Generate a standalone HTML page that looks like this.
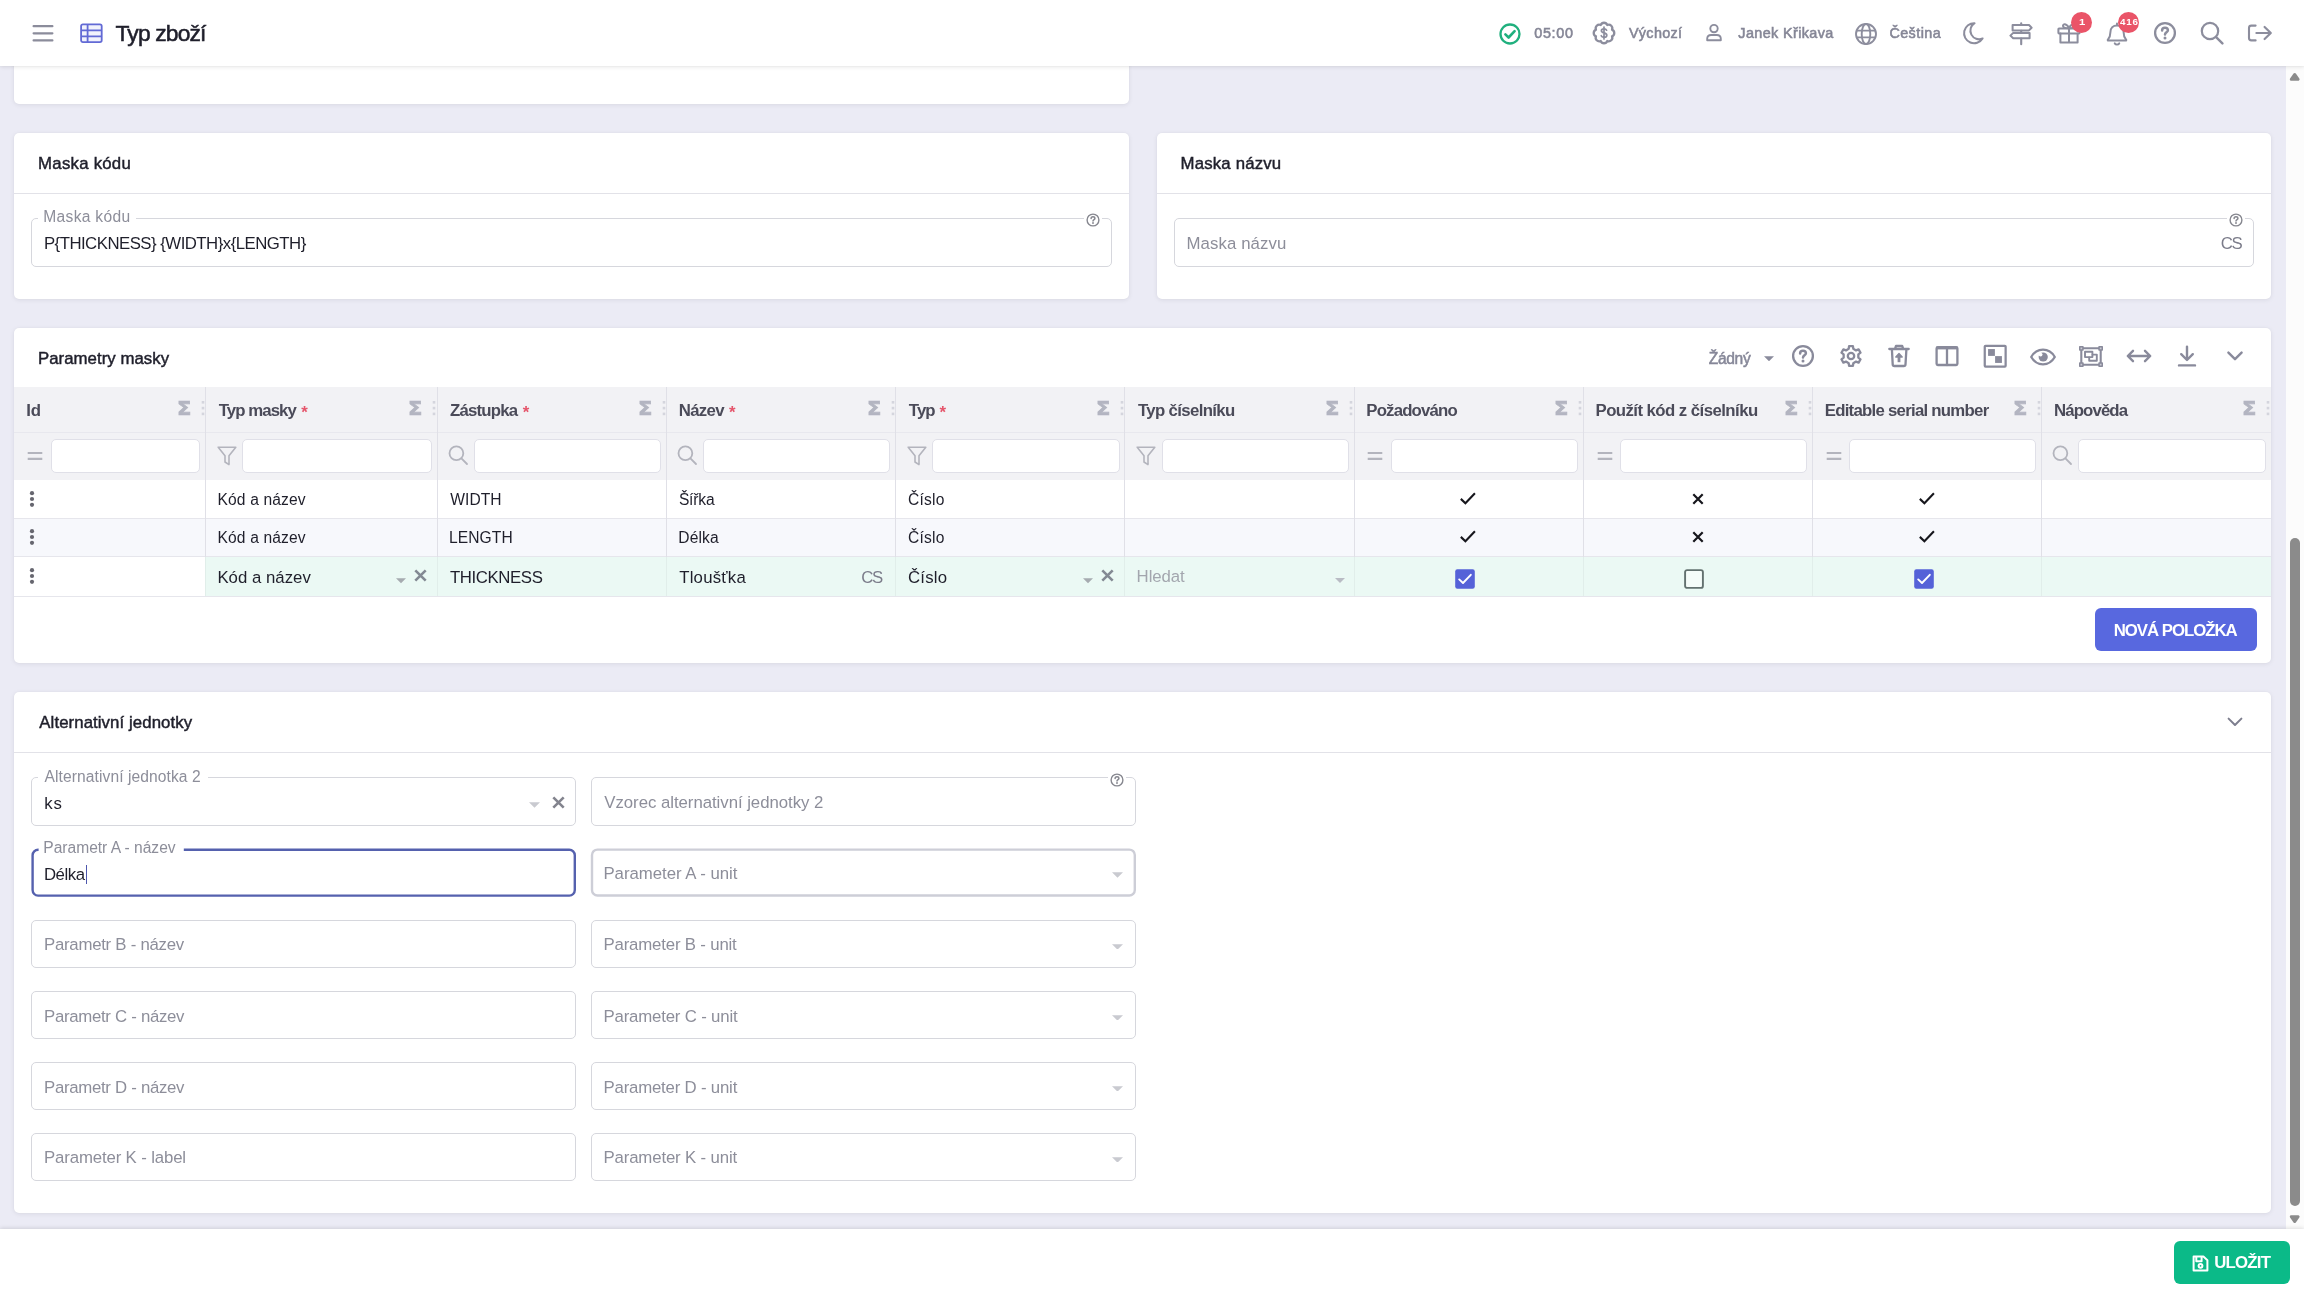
<!DOCTYPE html>
<html lang="cs"><head><meta charset="utf-8"><title>Typ zboží</title><style>
html,body{margin:0;padding:0}
body{width:2304px;height:1296px;overflow:hidden;position:relative;background:#ebebf5;font-family:"Liberation Sans",sans-serif;}
#root{position:absolute;left:0;top:0;width:2304px;height:1296px;will-change:transform;}
.t{position:absolute;white-space:nowrap;line-height:20px;}
.card{position:absolute;background:#fff;border-radius:5px;box-shadow:0 1px 5px rgba(20,20,40,.08),0 0 2px rgba(20,20,40,.06);}
.sep{position:absolute;height:1px;background:#e2e2e8;}
.inp{position:absolute;box-sizing:border-box;border:1px solid #d6d6de;border-radius:6px;background:#fff;}
.finp{position:absolute;box-sizing:border-box;border:1px solid #e0e0e8;border-radius:5px;background:#fff;height:34px;}
</style></head><body><div id="root">
<div class="card" style="left:14px;top:40px;width:1115px;height:64px"></div>
<div class="card" style="left:14px;top:133px;width:1115px;height:165.6px"></div>
<div class="card" style="left:1157px;top:133px;width:1114px;height:165.6px"></div>
<div class="card" style="left:14px;top:327.5px;width:2257px;height:335.5px"></div>
<div class="card" style="left:14px;top:692px;width:2257px;height:521px"></div>
<div class="" style="position:absolute;left:2286px;top:66px;width:18px;height:1163px;background:#fcfcfc;"></div>
<svg style="position:absolute;left:2286px;top:66px" width="18" height="1163" viewBox="0 0 18 1163"><path d="M5.2 13.4 L8.7 8.4 L12.2 13.4 Z" fill="#8b8b8b" stroke="#8b8b8b" stroke-width="2.8" stroke-linejoin="round"/><path d="M5.2 1150.6 L8.7 1155.6 L12.2 1150.6 Z" fill="#8b8b8b" stroke="#8b8b8b" stroke-width="2.8" stroke-linejoin="round"/><rect x="4" y="472" width="10" height="668" rx="5" fill="#8b8b8b"/></svg>
<div class="" style="position:absolute;left:0px;top:0px;width:2304px;height:66px;background:#fff;box-shadow:0 1px 4px rgba(0,0,0,.10),0 0 1px rgba(0,0,0,.08);z-index:5"></div>
<div style="position:absolute;left:0;top:0;width:2304px;height:66px;z-index:6">
<svg style="position:absolute;left:32px;top:24px" width="22" height="19" viewBox="0 0 22 19" fill="none" stroke="#8b8c9b" stroke-width="2.2" stroke-linecap="round"><path d="M1.6 2.2H20.4M1.6 9.3H20.4M1.6 16.4H20.4"/></svg>
<svg style="position:absolute;left:79px;top:22px" width="25" height="23" viewBox="0 0 25 23" fill="#f1f2fc" stroke="#626ad5" stroke-width="1.8" stroke-linejoin="round"><rect x="2.1" y="2.3" width="20.6" height="17.8" rx="1.8"/><path d="M2.1 8.3H22.7M2.1 14.3H22.7M8.6 2.3V20.1" fill="none"/></svg>
<span class="t " style="left:115.50px;top:18px;line-height:30px;font-size:22.8px;color:#1f1f2b;letter-spacing:-0.838px;-webkit-text-stroke:0.55px #1f1f2b;">Typ zboží</span>
</div>
<div class="" style="position:absolute;left:0px;top:1229px;width:2304px;height:67px;background:#fff;box-shadow:0 -1px 4px rgba(0,0,0,.12);z-index:5"></div>
<div style="position:absolute;left:0;top:1229px;width:2304px;height:67px;z-index:6">
<div class="" style="position:absolute;left:2173.8px;top:11.8px;width:115.8px;height:43.2px;background:#0bba88;border-radius:6px;"></div>
<svg style="position:absolute;left:2192px;top:25.5px" width="17" height="17" viewBox="0 0 17 17" fill="none" stroke="#fff" stroke-width="2" stroke-linejoin="round"><path d="M1.6 1.6H11.4L15.4 5.2V15.4H1.6Z"/><path d="M4.3 1.8V6.3H9.6V1.8"/><circle cx="8.5" cy="10.8" r="1.9"/></svg>
<span class="t " style="left:2214.30px;top:22px;line-height:23px;font-size:16.8px;color:#fff;font-weight:700;letter-spacing:-0.800px;">ULOŽIT</span>
</div>
<span class="t " style="left:38.10px;top:152px;line-height:23px;font-size:16.8px;color:#1f1f2b;letter-spacing:0.244px;-webkit-text-stroke:0.45px #1f1f2b;">Maska kódu</span>
<div class="sep" style="left:14px;top:193px;width:1115px"></div>
<div style="position:absolute;box-sizing:border-box;left:31px;top:218px;width:1081px;height:49px;border:1px solid #d6d7dd;border-radius:5px;background:#fff"></div>
<div style="position:absolute;left:38px;top:217px;width:98px;height:3px;background:#fff"></div>
<span class="t " style="left:43.30px;top:206px;line-height:21px;font-size:15.6px;color:#8d8e9a;letter-spacing:0.300px;">Maska kódu</span>
<span class="t " style="left:43.90px;top:232px;line-height:23px;font-size:16.8px;color:#1f1f2b;letter-spacing:-0.521px;">P{THICKNESS} {WIDTH}x{LENGTH}</span>
<div style="position:absolute;left:1084.4px;top:216.4px;width:17.6px;height:5px;background:#fff"></div>
<svg style="position:absolute;left:1085px;top:212.4px" width="16" height="16" viewBox="0 0 16 16"><circle cx="8" cy="8" r="5.9" fill="#fff" stroke="#86878f" stroke-width="1.4"/><path d="M6.1 6.6C6.1 5.4 7 4.8 8 4.8S9.9 5.4 9.9 6.5C9.9 7.6 8 7.8 8 9.1" fill="none" stroke="#86878f" stroke-width="1.5" stroke-linecap="round"/><circle cx="8" cy="11" r=".95" fill="#86878f"/></svg>
<span class="t " style="left:1180.60px;top:152px;line-height:23px;font-size:16.8px;color:#1f1f2b;letter-spacing:0.160px;-webkit-text-stroke:0.45px #1f1f2b;">Maska názvu</span>
<div class="sep" style="left:1157px;top:193px;width:1114px"></div>
<div style="position:absolute;box-sizing:border-box;left:1174px;top:218px;width:1080px;height:49px;border:1px solid #d6d7dd;border-radius:5px;background:#fff"></div>
<span class="t " style="left:1186.50px;top:232px;line-height:23px;font-size:16.8px;color:#8d8e9a;letter-spacing:0.090px;">Maska názvu</span>
<div style="position:absolute;left:2227.0px;top:216.4px;width:17.6px;height:5px;background:#fff"></div>
<svg style="position:absolute;left:2227.6px;top:212.4px" width="16" height="16" viewBox="0 0 16 16"><circle cx="8" cy="8" r="5.9" fill="#fff" stroke="#86878f" stroke-width="1.4"/><path d="M6.1 6.6C6.1 5.4 7 4.8 8 4.8S9.9 5.4 9.9 6.5C9.9 7.6 8 7.8 8 9.1" fill="none" stroke="#86878f" stroke-width="1.5" stroke-linecap="round"/><circle cx="8" cy="11" r=".95" fill="#86878f"/></svg>
<span class="t " style="left:2220.70px;top:232px;line-height:23px;font-size:16.8px;color:#7b7c8a;letter-spacing:-1.200px;">CS</span>
<span class="t " style="left:38.00px;top:347px;line-height:23px;font-size:16.8px;color:#1f1f2b;letter-spacing:0.036px;-webkit-text-stroke:0.45px #1f1f2b;">Parametry masky</span>
<span class="t " style="left:1708.70px;top:348px;line-height:21px;font-size:15.6px;color:#868798;letter-spacing:-0.325px;-webkit-text-stroke:0.5px #868798;">Žádný</span>
<svg style="position:absolute;left:1763.5px;top:355.5px" width="10.0" height="5.5" viewBox="0 0 10 5"><path d="M0 0H10L5 5Z" fill="#8a8b9c"/></svg>
<div class="" style="position:absolute;left:14px;top:387px;width:2257px;height:92.5px;background:#f2f2f5;"></div>
<div class="" style="position:absolute;left:14px;top:432.3px;width:2257px;height:1px;background:#e8e8ee;"></div>
<div class="" style="position:absolute;left:14px;top:479.5px;width:2257px;height:38.5px;background:#fff;"></div>
<div class="" style="position:absolute;left:14px;top:518px;width:2257px;height:38.5px;background:#f7f8fc;"></div>
<div class="" style="position:absolute;left:14px;top:518px;width:2257px;height:1px;background:#e6e6ec;"></div>
<div class="" style="position:absolute;left:14px;top:556px;width:2257px;height:1px;background:#e6e6ec;"></div>
<div class="" style="position:absolute;left:205.7px;top:557px;width:2065.3px;height:39px;background:#ebf9f4;"></div>
<div class="" style="position:absolute;left:14px;top:596px;width:2257px;height:1px;background:#e6e6ec;"></div>
<div class="" style="position:absolute;left:205.2px;top:387px;width:1px;height:170px;background:#e0e0e7;"></div>
<div class="" style="position:absolute;left:205.2px;top:557px;width:1px;height:39px;background:#e1eeea;"></div>
<div class="" style="position:absolute;left:436.8px;top:387px;width:1px;height:170px;background:#e0e0e7;"></div>
<div class="" style="position:absolute;left:436.8px;top:557px;width:1px;height:39px;background:#e1eeea;"></div>
<div class="" style="position:absolute;left:666.0px;top:387px;width:1px;height:170px;background:#e0e0e7;"></div>
<div class="" style="position:absolute;left:666.0px;top:557px;width:1px;height:39px;background:#e1eeea;"></div>
<div class="" style="position:absolute;left:895.2px;top:387px;width:1px;height:170px;background:#e0e0e7;"></div>
<div class="" style="position:absolute;left:895.2px;top:557px;width:1px;height:39px;background:#e1eeea;"></div>
<div class="" style="position:absolute;left:1124.4px;top:387px;width:1px;height:170px;background:#e0e0e7;"></div>
<div class="" style="position:absolute;left:1124.4px;top:557px;width:1px;height:39px;background:#e1eeea;"></div>
<div class="" style="position:absolute;left:1353.6px;top:387px;width:1px;height:170px;background:#e0e0e7;"></div>
<div class="" style="position:absolute;left:1353.6px;top:557px;width:1px;height:39px;background:#e1eeea;"></div>
<div class="" style="position:absolute;left:1582.8px;top:387px;width:1px;height:170px;background:#e0e0e7;"></div>
<div class="" style="position:absolute;left:1582.8px;top:557px;width:1px;height:39px;background:#e1eeea;"></div>
<div class="" style="position:absolute;left:1812.0px;top:387px;width:1px;height:170px;background:#e0e0e7;"></div>
<div class="" style="position:absolute;left:1812.0px;top:557px;width:1px;height:39px;background:#e1eeea;"></div>
<div class="" style="position:absolute;left:2041.2px;top:387px;width:1px;height:170px;background:#e0e0e7;"></div>
<div class="" style="position:absolute;left:2041.2px;top:557px;width:1px;height:39px;background:#e1eeea;"></div>
<span class="t " style="left:26.20px;top:399px;line-height:23px;font-size:16.8px;color:#4b4b59;font-weight:700;">Id</span>
<span class="t" style="left:176.7px;top:397px;line-height:24px;font-size:19.5px;font-weight:700;color:#b3b5c1;-webkit-text-stroke:0.7px #b3b5c1;font-family:&quot;DejaVu Sans&quot;,sans-serif;transform:scaleX(1.08);transform-origin:0 0">Σ</span>
<svg style="position:absolute;left:200.7px;top:399px" width="4" height="18" viewBox="0 0 4 18" fill="#d4d5dd"><rect x=".7" y="2" width="2.6" height="2.6"/><rect x=".7" y="7.8" width="2.6" height="2.6"/><rect x=".7" y="13.6" width="2.6" height="2.6"/></svg>
<div class="finp" style="left:50.6px;top:439px;width:149.9px"></div>
<svg style="position:absolute;left:27.3px;top:448px" width="16" height="16" viewBox="0 0 16 16" stroke="#b3b4bd" stroke-width="2.1" stroke-linecap="butt"><path d="M.7 5H15.3M.7 10.9H15.3"/></svg>
<span class="t " style="left:218.80px;top:399px;line-height:23px;font-size:16.8px;color:#4b4b59;font-weight:700;letter-spacing:-0.938px;">Typ masky</span>
<span class="t " style="left:301.20px;top:401px;line-height:23px;font-size:16.8px;color:#e5556b;font-weight:700;">*</span>
<span class="t" style="left:408.3px;top:397px;line-height:24px;font-size:19.5px;font-weight:700;color:#b3b5c1;-webkit-text-stroke:0.7px #b3b5c1;font-family:&quot;DejaVu Sans&quot;,sans-serif;transform:scaleX(1.08);transform-origin:0 0">Σ</span>
<svg style="position:absolute;left:432.3px;top:399px" width="4" height="18" viewBox="0 0 4 18" fill="#d4d5dd"><rect x=".7" y="2" width="2.6" height="2.6"/><rect x=".7" y="7.8" width="2.6" height="2.6"/><rect x=".7" y="13.6" width="2.6" height="2.6"/></svg>
<div class="finp" style="left:242.3px;top:439px;width:189.8px"></div>
<svg style="position:absolute;left:216.0px;top:445px" width="22" height="22" viewBox="0 0 22 22" fill="none" stroke="#b3b4bd" stroke-width="1.6" stroke-linejoin="round" stroke-linecap="round"><path d="M2.2 2.2H19.8L13 10.8V19.6L9 17V10.8Z"/></svg>
<span class="t " style="left:450.10px;top:399px;line-height:23px;font-size:16.8px;color:#4b4b59;font-weight:700;letter-spacing:-0.814px;">Zástupka</span>
<span class="t " style="left:522.70px;top:401px;line-height:23px;font-size:16.8px;color:#e5556b;font-weight:700;">*</span>
<span class="t" style="left:637.5px;top:397px;line-height:24px;font-size:19.5px;font-weight:700;color:#b3b5c1;-webkit-text-stroke:0.7px #b3b5c1;font-family:&quot;DejaVu Sans&quot;,sans-serif;transform:scaleX(1.08);transform-origin:0 0">Σ</span>
<svg style="position:absolute;left:661.5px;top:399px" width="4" height="18" viewBox="0 0 4 18" fill="#d4d5dd"><rect x=".7" y="2" width="2.6" height="2.6"/><rect x=".7" y="7.8" width="2.6" height="2.6"/><rect x=".7" y="13.6" width="2.6" height="2.6"/></svg>
<div class="finp" style="left:473.9px;top:439px;width:187.4px"></div>
<svg style="position:absolute;left:446.5px;top:444.3px" width="22" height="22" viewBox="0 0 22 22" fill="none" stroke="#b3b4bd" stroke-width="1.8" stroke-linecap="round"><circle cx="9.4" cy="9.2" r="6.9"/><path d="M14.4 14.3L20 20"/></svg>
<span class="t " style="left:678.70px;top:399px;line-height:23px;font-size:16.8px;color:#4b4b59;font-weight:700;letter-spacing:-0.675px;">Název</span>
<span class="t " style="left:728.90px;top:401px;line-height:23px;font-size:16.8px;color:#e5556b;font-weight:700;">*</span>
<span class="t" style="left:866.7px;top:397px;line-height:24px;font-size:19.5px;font-weight:700;color:#b3b5c1;-webkit-text-stroke:0.7px #b3b5c1;font-family:&quot;DejaVu Sans&quot;,sans-serif;transform:scaleX(1.08);transform-origin:0 0">Σ</span>
<svg style="position:absolute;left:890.7px;top:399px" width="4" height="18" viewBox="0 0 4 18" fill="#d4d5dd"><rect x=".7" y="2" width="2.6" height="2.6"/><rect x=".7" y="7.8" width="2.6" height="2.6"/><rect x=".7" y="13.6" width="2.6" height="2.6"/></svg>
<div class="finp" style="left:703.1px;top:439px;width:187.4px"></div>
<svg style="position:absolute;left:675.7px;top:444.3px" width="22" height="22" viewBox="0 0 22 22" fill="none" stroke="#b3b4bd" stroke-width="1.8" stroke-linecap="round"><circle cx="9.4" cy="9.2" r="6.9"/><path d="M14.4 14.3L20 20"/></svg>
<span class="t " style="left:908.80px;top:399px;line-height:23px;font-size:16.8px;color:#4b4b59;font-weight:700;letter-spacing:-0.900px;">Typ</span>
<span class="t " style="left:939.40px;top:401px;line-height:23px;font-size:16.8px;color:#e5556b;font-weight:700;">*</span>
<span class="t" style="left:1095.9px;top:397px;line-height:24px;font-size:19.5px;font-weight:700;color:#b3b5c1;-webkit-text-stroke:0.7px #b3b5c1;font-family:&quot;DejaVu Sans&quot;,sans-serif;transform:scaleX(1.08);transform-origin:0 0">Σ</span>
<svg style="position:absolute;left:1119.9px;top:399px" width="4" height="18" viewBox="0 0 4 18" fill="#d4d5dd"><rect x=".7" y="2" width="2.6" height="2.6"/><rect x=".7" y="7.8" width="2.6" height="2.6"/><rect x=".7" y="13.6" width="2.6" height="2.6"/></svg>
<div class="finp" style="left:932.3px;top:439px;width:187.4px"></div>
<svg style="position:absolute;left:906.0px;top:445px" width="22" height="22" viewBox="0 0 22 22" fill="none" stroke="#b3b4bd" stroke-width="1.6" stroke-linejoin="round" stroke-linecap="round"><path d="M2.2 2.2H19.8L13 10.8V19.6L9 17V10.8Z"/></svg>
<span class="t " style="left:1138.00px;top:399px;line-height:23px;font-size:16.8px;color:#4b4b59;font-weight:700;letter-spacing:-0.658px;">Typ číselníku</span>
<span class="t" style="left:1325.1px;top:397px;line-height:24px;font-size:19.5px;font-weight:700;color:#b3b5c1;-webkit-text-stroke:0.7px #b3b5c1;font-family:&quot;DejaVu Sans&quot;,sans-serif;transform:scaleX(1.08);transform-origin:0 0">Σ</span>
<svg style="position:absolute;left:1349.1px;top:399px" width="4" height="18" viewBox="0 0 4 18" fill="#d4d5dd"><rect x=".7" y="2" width="2.6" height="2.6"/><rect x=".7" y="7.8" width="2.6" height="2.6"/><rect x=".7" y="13.6" width="2.6" height="2.6"/></svg>
<div class="finp" style="left:1161.5px;top:439px;width:187.4px"></div>
<svg style="position:absolute;left:1135.2px;top:445px" width="22" height="22" viewBox="0 0 22 22" fill="none" stroke="#b3b4bd" stroke-width="1.6" stroke-linejoin="round" stroke-linecap="round"><path d="M2.2 2.2H19.8L13 10.8V19.6L9 17V10.8Z"/></svg>
<span class="t " style="left:1366.30px;top:399px;line-height:23px;font-size:16.8px;color:#4b4b59;font-weight:700;letter-spacing:-0.833px;">Požadováno</span>
<span class="t" style="left:1554.3px;top:397px;line-height:24px;font-size:19.5px;font-weight:700;color:#b3b5c1;-webkit-text-stroke:0.7px #b3b5c1;font-family:&quot;DejaVu Sans&quot;,sans-serif;transform:scaleX(1.08);transform-origin:0 0">Σ</span>
<svg style="position:absolute;left:1578.3px;top:399px" width="4" height="18" viewBox="0 0 4 18" fill="#d4d5dd"><rect x=".7" y="2" width="2.6" height="2.6"/><rect x=".7" y="7.8" width="2.6" height="2.6"/><rect x=".7" y="13.6" width="2.6" height="2.6"/></svg>
<div class="finp" style="left:1390.7px;top:439px;width:187.4px"></div>
<svg style="position:absolute;left:1367.4px;top:448px" width="16" height="16" viewBox="0 0 16 16" stroke="#b3b4bd" stroke-width="2.1" stroke-linecap="butt"><path d="M.7 5H15.3M.7 10.9H15.3"/></svg>
<span class="t " style="left:1595.50px;top:399px;line-height:23px;font-size:16.8px;color:#4b4b59;font-weight:700;letter-spacing:-0.557px;">Použít kód z číselníku</span>
<span class="t" style="left:1783.5px;top:397px;line-height:24px;font-size:19.5px;font-weight:700;color:#b3b5c1;-webkit-text-stroke:0.7px #b3b5c1;font-family:&quot;DejaVu Sans&quot;,sans-serif;transform:scaleX(1.08);transform-origin:0 0">Σ</span>
<svg style="position:absolute;left:1807.5px;top:399px" width="4" height="18" viewBox="0 0 4 18" fill="#d4d5dd"><rect x=".7" y="2" width="2.6" height="2.6"/><rect x=".7" y="7.8" width="2.6" height="2.6"/><rect x=".7" y="13.6" width="2.6" height="2.6"/></svg>
<div class="finp" style="left:1619.9px;top:439px;width:187.4px"></div>
<svg style="position:absolute;left:1596.6px;top:448px" width="16" height="16" viewBox="0 0 16 16" stroke="#b3b4bd" stroke-width="2.1" stroke-linecap="butt"><path d="M.7 5H15.3M.7 10.9H15.3"/></svg>
<span class="t " style="left:1824.70px;top:399px;line-height:23px;font-size:16.8px;color:#4b4b59;font-weight:700;letter-spacing:-0.738px;">Editable serial number</span>
<span class="t" style="left:2012.7px;top:397px;line-height:24px;font-size:19.5px;font-weight:700;color:#b3b5c1;-webkit-text-stroke:0.7px #b3b5c1;font-family:&quot;DejaVu Sans&quot;,sans-serif;transform:scaleX(1.08);transform-origin:0 0">Σ</span>
<svg style="position:absolute;left:2036.7px;top:399px" width="4" height="18" viewBox="0 0 4 18" fill="#d4d5dd"><rect x=".7" y="2" width="2.6" height="2.6"/><rect x=".7" y="7.8" width="2.6" height="2.6"/><rect x=".7" y="13.6" width="2.6" height="2.6"/></svg>
<div class="finp" style="left:1849.1px;top:439px;width:187.4px"></div>
<svg style="position:absolute;left:1825.8px;top:448px" width="16" height="16" viewBox="0 0 16 16" stroke="#b3b4bd" stroke-width="2.1" stroke-linecap="butt"><path d="M.7 5H15.3M.7 10.9H15.3"/></svg>
<span class="t " style="left:2053.90px;top:399px;line-height:23px;font-size:16.8px;color:#4b4b59;font-weight:700;letter-spacing:-0.857px;">Nápověda</span>
<span class="t" style="left:2242.0px;top:397px;line-height:24px;font-size:19.5px;font-weight:700;color:#b3b5c1;-webkit-text-stroke:0.7px #b3b5c1;font-family:&quot;DejaVu Sans&quot;,sans-serif;transform:scaleX(1.08);transform-origin:0 0">Σ</span>
<svg style="position:absolute;left:2266.0px;top:399px" width="4" height="18" viewBox="0 0 4 18" fill="#d4d5dd"><rect x=".7" y="2" width="2.6" height="2.6"/><rect x=".7" y="7.8" width="2.6" height="2.6"/><rect x=".7" y="13.6" width="2.6" height="2.6"/></svg>
<div class="finp" style="left:2078.3px;top:439px;width:187.5px"></div>
<svg style="position:absolute;left:2050.9px;top:444.3px" width="22" height="22" viewBox="0 0 22 22" fill="none" stroke="#b3b4bd" stroke-width="1.8" stroke-linecap="round"><circle cx="9.4" cy="9.2" r="6.9"/><path d="M14.4 14.3L20 20"/></svg>
<svg style="position:absolute;left:29px;top:490px" width="6" height="18" viewBox="0 0 6 18" fill="#66666f"><circle cx="3" cy="3.2" r="2.1"/><circle cx="3" cy="9" r="2.1"/><circle cx="3" cy="14.8" r="2.1"/></svg>
<svg style="position:absolute;left:29px;top:528px" width="6" height="18" viewBox="0 0 6 18" fill="#66666f"><circle cx="3" cy="3.2" r="2.1"/><circle cx="3" cy="9" r="2.1"/><circle cx="3" cy="14.8" r="2.1"/></svg>
<svg style="position:absolute;left:29px;top:567px" width="6" height="18" viewBox="0 0 6 18" fill="#66666f"><circle cx="3" cy="3.2" r="2.1"/><circle cx="3" cy="9" r="2.1"/><circle cx="3" cy="14.8" r="2.1"/></svg>
<span class="t " style="left:217.50px;top:489px;line-height:21px;font-size:15.6px;color:#1f1f2b;letter-spacing:0.140px;">Kód a název</span>
<span class="t " style="left:450.30px;top:489px;line-height:21px;font-size:15.6px;color:#1f1f2b;letter-spacing:0.050px;">WIDTH</span>
<span class="t " style="left:678.90px;top:489px;line-height:21px;font-size:15.6px;color:#1f1f2b;letter-spacing:-0.175px;">Šířka</span>
<span class="t " style="left:908.00px;top:489px;line-height:21px;font-size:15.6px;color:#1f1f2b;letter-spacing:0.225px;">Číslo</span>
<span class="t " style="left:217.50px;top:527px;line-height:21px;font-size:15.6px;color:#1f1f2b;letter-spacing:0.140px;">Kód a název</span>
<span class="t " style="left:449.10px;top:527px;line-height:21px;font-size:15.6px;color:#1f1f2b;letter-spacing:0.060px;">LENGTH</span>
<span class="t " style="left:678.30px;top:527px;line-height:21px;font-size:15.6px;color:#1f1f2b;letter-spacing:0.100px;">Délka</span>
<span class="t " style="left:908.00px;top:527px;line-height:21px;font-size:15.6px;color:#1f1f2b;letter-spacing:0.225px;">Číslo</span>
<span class="t " style="left:217.40px;top:566px;line-height:23px;font-size:16.8px;color:#1f1f2b;letter-spacing:0.010px;">Kód a název</span>
<span class="t " style="left:450.00px;top:566px;line-height:23px;font-size:16.8px;color:#1f1f2b;letter-spacing:-0.400px;">THICKNESS</span>
<span class="t " style="left:679.20px;top:566px;line-height:23px;font-size:16.8px;color:#1f1f2b;letter-spacing:0.214px;">Tloušťka</span>
<span class="t " style="left:908.00px;top:566px;line-height:23px;font-size:16.8px;color:#1f1f2b;letter-spacing:0.225px;">Číslo</span>
<span class="t " style="left:861.20px;top:566px;line-height:23px;font-size:16.8px;color:#7b7c8a;letter-spacing:-1.200px;">CS</span>
<span class="t " style="left:1136.60px;top:565px;line-height:23px;font-size:16.8px;color:#a3a6ae;letter-spacing:-0.080px;">Hledat</span>
<svg style="position:absolute;left:396.2px;top:578.1px" width="10.0" height="5.5" viewBox="0 0 10 5"><path d="M0 0H10L5 5Z" fill="#a6abb0"/></svg>
<svg style="position:absolute;left:413.5px;top:569px" width="13" height="13" viewBox="0 0 12 12" fill="none" stroke="#838993" stroke-width="2.4" stroke-linecap="butt"><path d="M1.2 1.2L10.8 10.8M10.8 1.2L1.2 10.8"/></svg>
<svg style="position:absolute;left:1083.2px;top:578.1px" width="10.0" height="5.5" viewBox="0 0 10 5"><path d="M0 0H10L5 5Z" fill="#a6abb0"/></svg>
<svg style="position:absolute;left:1101.3px;top:569px" width="13" height="13" viewBox="0 0 12 12" fill="none" stroke="#838993" stroke-width="2.4" stroke-linecap="butt"><path d="M1.2 1.2L10.8 10.8M10.8 1.2L1.2 10.8"/></svg>
<svg style="position:absolute;left:1335px;top:577.5px" width="10" height="5.0" viewBox="0 0 10 5"><path d="M0 0H10L5 5Z" fill="#b9bcc4"/></svg>
<svg style="position:absolute;left:1459px;top:491px" width="18" height="16" viewBox="0 0 18 16" fill="none" stroke="#16161c" stroke-width="2.1" stroke-linecap="square" stroke-linejoin="miter"><path d="M2.6 8.6L6.4 12.2L15.2 3"/></svg>
<svg style="position:absolute;left:1690.7px;top:492px" width="14" height="14" viewBox="0 0 14 14" fill="none" stroke="#16161c" stroke-width="2.2" stroke-linecap="butt"><path d="M2.3 2.3L11.7 11.7M11.7 2.3L2.3 11.7"/></svg>
<svg style="position:absolute;left:1917.5px;top:491px" width="18" height="16" viewBox="0 0 18 16" fill="none" stroke="#16161c" stroke-width="2.1" stroke-linecap="square" stroke-linejoin="miter"><path d="M2.6 8.6L6.4 12.2L15.2 3"/></svg>
<svg style="position:absolute;left:1459px;top:529px" width="18" height="16" viewBox="0 0 18 16" fill="none" stroke="#16161c" stroke-width="2.1" stroke-linecap="square" stroke-linejoin="miter"><path d="M2.6 8.6L6.4 12.2L15.2 3"/></svg>
<svg style="position:absolute;left:1690.7px;top:530px" width="14" height="14" viewBox="0 0 14 14" fill="none" stroke="#16161c" stroke-width="2.2" stroke-linecap="butt"><path d="M2.3 2.3L11.7 11.7M11.7 2.3L2.3 11.7"/></svg>
<svg style="position:absolute;left:1917.5px;top:529px" width="18" height="16" viewBox="0 0 18 16" fill="none" stroke="#16161c" stroke-width="2.1" stroke-linecap="square" stroke-linejoin="miter"><path d="M2.6 8.6L6.4 12.2L15.2 3"/></svg>
<svg style="position:absolute;left:1455.3px;top:569px" width="20" height="20" viewBox="0 0 20 20"><rect x=".2" y=".2" width="19.6" height="19.6" rx="2.2" fill="#5562d8"/><path d="M4.2 10.4L8 14L15.8 5.8" fill="none" stroke="#fff" stroke-width="1.9" stroke-linecap="round" stroke-linejoin="round"/></svg>
<svg style="position:absolute;left:1684px;top:569px" width="20" height="20" viewBox="0 0 20 20"><rect x="1.1" y="1.1" width="17.8" height="17.8" rx="2" fill="#f5fcf9" stroke="#63716f" stroke-width="1.9"/></svg>
<svg style="position:absolute;left:1913.5px;top:569px" width="20" height="20" viewBox="0 0 20 20"><rect x=".2" y=".2" width="19.6" height="19.6" rx="2.2" fill="#5562d8"/><path d="M4.2 10.4L8 14L15.8 5.8" fill="none" stroke="#fff" stroke-width="1.9" stroke-linecap="round" stroke-linejoin="round"/></svg>
<div class="" style="position:absolute;left:2095.2px;top:608.2px;width:161.7px;height:43.2px;background:#5868df;border-radius:6px;"></div>
<span class="t " style="left:2113.70px;top:619px;line-height:23px;font-size:16.8px;color:#fff;font-weight:700;letter-spacing:-1.018px;">NOVÁ POLOŽKA</span>
<span class="t " style="left:39.30px;top:711px;line-height:23px;font-size:16.8px;color:#1f1f2b;letter-spacing:0.085px;-webkit-text-stroke:0.45px #1f1f2b;">Alternativní jednotky</span>
<div class="sep" style="left:14px;top:752px;width:2257px"></div>
<svg style="position:absolute;left:2226px;top:714px" width="18" height="16" viewBox="0 0 18 16" fill="none" stroke="#7d7e8e" stroke-width="2" stroke-linecap="round" stroke-linejoin="round"><path d="M2.6 4.6L9 11L15.4 4.6"/></svg>
<div style="position:absolute;box-sizing:border-box;left:31px;top:777px;width:545px;height:49px;border:1px solid #d6d7dd;border-radius:5px;background:#fff"></div>
<div style="position:absolute;left:38px;top:776px;width:169.5px;height:3px;background:#fff"></div>
<span class="t " style="left:44.60px;top:766px;line-height:21px;font-size:15.6px;color:#8d8e9a;letter-spacing:0.082px;">Alternativní jednotka 2</span>
<span class="t " style="left:44.20px;top:792px;line-height:23px;font-size:16.8px;color:#1f1f2b;letter-spacing:0.900px;">ks</span>
<svg style="position:absolute;left:528.6px;top:801.9px" width="11.0" height="5.800000000000068" viewBox="0 0 10 5"><path d="M0 0H10L5 5Z" fill="#c9cad0"/></svg>
<svg style="position:absolute;left:552.2px;top:795.9px" width="13" height="13" viewBox="0 0 12 12" fill="none" stroke="#83848e" stroke-width="2.4" stroke-linecap="butt"><path d="M1.2 1.2L10.8 10.8M10.8 1.2L1.2 10.8"/></svg>
<div style="position:absolute;box-sizing:border-box;left:591px;top:777px;width:545px;height:49px;border:1px solid #d6d7dd;border-radius:5px;background:#fff"></div>
<span class="t " style="left:604.30px;top:791px;line-height:23px;font-size:16.8px;color:#8d8e9a;letter-spacing:-0.038px;">Vzorec alternativní jednotky 2</span>
<div style="position:absolute;left:1108.1px;top:776.3px;width:17.6px;height:5px;background:#fff"></div>
<svg style="position:absolute;left:1108.7px;top:772.3px" width="16" height="16" viewBox="0 0 16 16"><circle cx="8" cy="8" r="5.9" fill="#fff" stroke="#86878f" stroke-width="1.4"/><path d="M6.1 6.6C6.1 5.4 7 4.8 8 4.8S9.9 5.4 9.9 6.5C9.9 7.6 8 7.8 8 9.1" fill="none" stroke="#86878f" stroke-width="1.5" stroke-linecap="round"/><circle cx="8" cy="11" r=".95" fill="#86878f"/></svg>
<svg style="position:absolute;left:29px;top:845px" width="550" height="55" viewBox="0 0 550 55"><rect x="3.60" y="4.80" width="542.20" height="45.80" rx="5.5" fill="#fff" stroke="#5561ae" stroke-width="2.4"/><rect x="9.60" y="2.60" width="145.20" height="4.4" fill="#fff"/></svg>
<span class="t " style="left:43.30px;top:837px;line-height:21px;font-size:15.6px;color:#8d8e9a;letter-spacing:-0.018px;">Parametr A - název</span>
<span class="t " style="left:43.90px;top:863px;line-height:23px;font-size:16.8px;color:#1f1f2b;letter-spacing:-0.400px;">Délka</span>
<div class="" style="position:absolute;left:85.9px;top:864.5px;width:1.2px;height:19px;background:#4d57ad;"></div>
<svg style="position:absolute;left:588px;top:845px" width="551" height="55" viewBox="0 0 551 55"><rect x="4.00" y="4.60" width="542.80" height="45.90" rx="5.5" fill="#fff" stroke="#cdced7" stroke-width="2.4"/></svg>
<span class="t " style="left:603.40px;top:862px;line-height:23px;font-size:16.8px;color:#8d8e9a;letter-spacing:-0.012px;">Parameter A - unit</span>
<svg style="position:absolute;left:1111.8px;top:872.1px" width="11.0" height="5.7999999999999545" viewBox="0 0 10 5"><path d="M0 0H10L5 5Z" fill="#c9cad0"/></svg>
<div style="position:absolute;box-sizing:border-box;left:31px;top:920px;width:545px;height:48px;border:1px solid #d6d7dd;border-radius:5px;background:#fff"></div>
<div style="position:absolute;box-sizing:border-box;left:591px;top:920px;width:545px;height:48px;border:1px solid #d6d7dd;border-radius:5px;background:#fff"></div>
<span class="t " style="left:44.00px;top:933px;line-height:23px;font-size:16.8px;color:#8d8e9a;letter-spacing:-0.259px;">Parametr B - název</span>
<span class="t " style="left:603.50px;top:933px;line-height:23px;font-size:16.8px;color:#8d8e9a;letter-spacing:-0.171px;">Parameter B - unit</span>
<svg style="position:absolute;left:1111.8px;top:943.6px" width="11.0" height="5.7999999999999545" viewBox="0 0 10 5"><path d="M0 0H10L5 5Z" fill="#c9cad0"/></svg>
<div style="position:absolute;box-sizing:border-box;left:31px;top:991px;width:545px;height:48px;border:1px solid #d6d7dd;border-radius:5px;background:#fff"></div>
<div style="position:absolute;box-sizing:border-box;left:591px;top:991px;width:545px;height:48px;border:1px solid #d6d7dd;border-radius:5px;background:#fff"></div>
<span class="t " style="left:44.00px;top:1005px;line-height:23px;font-size:16.8px;color:#8d8e9a;letter-spacing:-0.294px;">Parametr C - název</span>
<span class="t " style="left:603.50px;top:1005px;line-height:23px;font-size:16.8px;color:#8d8e9a;letter-spacing:-0.176px;">Parameter C - unit</span>
<svg style="position:absolute;left:1111.8px;top:1014.6px" width="11.0" height="5.7999999999999545" viewBox="0 0 10 5"><path d="M0 0H10L5 5Z" fill="#c9cad0"/></svg>
<div style="position:absolute;box-sizing:border-box;left:31px;top:1062px;width:545px;height:48px;border:1px solid #d6d7dd;border-radius:5px;background:#fff"></div>
<div style="position:absolute;box-sizing:border-box;left:591px;top:1062px;width:545px;height:48px;border:1px solid #d6d7dd;border-radius:5px;background:#fff"></div>
<span class="t " style="left:44.00px;top:1076px;line-height:23px;font-size:16.8px;color:#8d8e9a;letter-spacing:-0.294px;">Parametr D - název</span>
<span class="t " style="left:603.50px;top:1076px;line-height:23px;font-size:16.8px;color:#8d8e9a;letter-spacing:-0.194px;">Parameter D - unit</span>
<svg style="position:absolute;left:1111.8px;top:1085.6px" width="11.0" height="5.800000000000182" viewBox="0 0 10 5"><path d="M0 0H10L5 5Z" fill="#c9cad0"/></svg>
<div style="position:absolute;box-sizing:border-box;left:31px;top:1133px;width:545px;height:48px;border:1px solid #d6d7dd;border-radius:5px;background:#fff"></div>
<div style="position:absolute;box-sizing:border-box;left:591px;top:1133px;width:545px;height:48px;border:1px solid #d6d7dd;border-radius:5px;background:#fff"></div>
<span class="t " style="left:44.00px;top:1146px;line-height:23px;font-size:16.8px;color:#8d8e9a;letter-spacing:-0.139px;">Parameter K - label</span>
<span class="t " style="left:603.50px;top:1146px;line-height:23px;font-size:16.8px;color:#8d8e9a;letter-spacing:-0.147px;">Parameter K - unit</span>
<svg style="position:absolute;left:1111.8px;top:1156.6px" width="11.0" height="5.800000000000182" viewBox="0 0 10 5"><path d="M0 0H10L5 5Z" fill="#c9cad0"/></svg>
<svg style="position:absolute;left:1791.20px;top:344.20px;" width="24" height="24" viewBox="0 0 24 24" fill="none" stroke="#898a9b" stroke-width="2.3" stroke-linecap="round" stroke-linejoin="round"><circle cx="12" cy="12" r="9.9"/><path d="M9.1 9.4C9.1 7.6 10.5 6.7 12 6.7S14.9 7.7 14.9 9.3C14.9 11.2 12 11.5 12 13.6" stroke-width="2.5"/><circle cx="12" cy="17.1" r="1.5" fill="#898a9b" stroke="none"/></svg>
<svg style="position:absolute;left:1839.20px;top:344.30px;" width="24" height="24" viewBox="0 0 24 24" fill="none" stroke="#898a9b" stroke-width="2.3" stroke-linecap="round" stroke-linejoin="round"><path d="M13.93 2.09L10.07 2.09L9.68 4.87L6.98 6.43L4.38 5.37L2.45 8.71L4.66 10.44L4.66 13.56L2.45 15.29L4.38 18.63L6.98 17.57L9.68 19.13L10.07 21.91L13.93 21.91L14.32 19.13L17.02 17.57L19.62 18.63L21.55 15.29L19.34 13.56L19.34 10.44L21.55 8.71L19.62 5.37L17.02 6.43L14.32 4.87Z"/><circle cx="12" cy="12" r="3.2"/></svg>
<svg style="position:absolute;left:1887.00px;top:343.30px;" width="24" height="26" viewBox="0 0 24 26" fill="none" stroke="#898a9b" stroke-width="2.3" stroke-linecap="round" stroke-linejoin="round"><path d="M2.3 6H21.7M8 5.8L9 3H15.2L16.2 5.8M4.9 6.2L5.7 21.4Q5.8 23 7.4 23H16.8Q18.4 23 18.5 21.4L19.4 6.2"/><path d="M12 14V19.2" stroke-width="2.8" stroke-linecap="butt"/><path d="M12 10.6L8.8 14H15.2Z" fill="#898a9b" stroke-width="1.4"/></svg>
<svg style="position:absolute;left:1934.30px;top:345.10px;" width="26" height="22" viewBox="0 0 26 22" fill="none" stroke="#898a9b" stroke-width="2.3" stroke-linecap="round" stroke-linejoin="round"><rect x="2.6" y="2.2" width="20.8" height="17.8" rx="1.2"/><path d="M2.6 3H23.4" stroke-width="2.8" stroke-linecap="butt"/><path d="M13 3V20"/></svg>
<svg style="position:absolute;left:1983.20px;top:344.20px;" width="24.4" height="24.4" viewBox="0 0 25 25" fill="none" stroke="#898a9b" stroke-width="2.3" stroke-linecap="round" stroke-linejoin="round"><rect x="1.8" y="1.8" width="21.4" height="21.4" rx="0.8"/><rect x="5.2" y="5.2" width="7" height="7" fill="#898a9b" stroke="none"/><rect x="12.4" y="12.4" width="7" height="7" fill="#898a9b" stroke="none"/></svg>
<svg style="position:absolute;left:2029.10px;top:346.60px;" width="28" height="20" viewBox="0 0 28 20" fill="none" stroke="#898a9b" stroke-width="2.3" stroke-linecap="round" stroke-linejoin="round"><path d="M2.2 10C5.2 4.8 9.6 2.7 14 2.7S22.8 4.8 25.8 10C22.8 15.2 18.4 17.3 14 17.3S5.2 15.2 2.2 10Z"/><circle cx="14.2" cy="10" r="4.6" fill="#898a9b" stroke="none"/><circle cx="11.6" cy="7.6" r="1.9" fill="#fff" stroke="none"/></svg>
<svg style="position:absolute;left:2079.40px;top:345.80px;" width="24" height="21" viewBox="0 0 24 21" fill="none" stroke="#898a9b" stroke-width="2.3" stroke-linecap="round" stroke-linejoin="round"><rect x="2.3" y="2.3" width="19.4" height="16.4" stroke-width="2.1"/><rect x="6" y="5.7" width="7.4" height="5.4" stroke-width="1.9"/><path d="M13.6 8.6H17.8V14.8H10.2V11.4" stroke-width="1.9"/><rect x="0.75" y="0.75" width="3.2" height="3.2" fill="#c9cad3" stroke-width="1.5"/><rect x="0.75" y="17.05" width="3.2" height="3.2" fill="#c9cad3" stroke-width="1.5"/><rect x="20.05" y="0.75" width="3.2" height="3.2" fill="#c9cad3" stroke-width="1.5"/><rect x="20.05" y="17.05" width="3.2" height="3.2" fill="#c9cad3" stroke-width="1.5"/></svg>
<svg style="position:absolute;left:2126.30px;top:349.40px;" width="26" height="14" viewBox="0 0 26 14" fill="none" stroke="#898a9b" stroke-width="2.3" stroke-linecap="round" stroke-linejoin="round"><path d="M2.2 7H23.8M7 1.8L1.8 7L7 12.2M19 1.8L24.2 7L19 12.2" stroke-width="2.4"/></svg>
<svg style="position:absolute;left:2177.20px;top:345.10px;" width="20" height="22" viewBox="0 0 20 22" fill="none" stroke="#898a9b" stroke-width="2.3" stroke-linecap="round" stroke-linejoin="round"><path d="M10 1.6V14.6M4.2 9.2L10 15L15.8 9.2M2 20.4H18" stroke-width="2.4"/></svg>
<svg style="position:absolute;left:2226.10px;top:350.20px;" width="18" height="12" viewBox="0 0 18 12" fill="none" stroke="#898a9b" stroke-width="2.3" stroke-linecap="round" stroke-linejoin="round"><path d="M2.4 2.6L9 9.2L15.6 2.6" stroke-width="2.4"/></svg>
<div style="position:absolute;left:0;top:0;width:2304px;height:66px;z-index:7">
<svg style="position:absolute;left:1498.30px;top:21.60px;" width="24" height="24" viewBox="0 0 24 24" fill="none" stroke="#20b07e" stroke-width="2.3" stroke-linecap="round" stroke-linejoin="round"><circle cx="12" cy="12" r="9.5"/><path d="M7.4 12.4L10.6 15.5L16.6 9.1" stroke-width="2.6"/></svg>
<span class="t " style="left:1534.20px;top:23px;line-height:20px;font-size:14.4px;color:#858696;letter-spacing:0.700px;-webkit-text-stroke:0.55px #858696;">05:00</span>
<svg style="position:absolute;left:1591.40px;top:20.40px;" width="26" height="26" viewBox="0 0 26 26" fill="none" stroke="#8c8d9d" stroke-width="2.3" stroke-linecap="round" stroke-linejoin="round"><path d="M21.04 16.33A3.6 3.6 0 0 1 16.33 21.04A3.6 3.6 0 0 1 9.67 21.04A3.6 3.6 0 0 1 4.96 16.33A3.6 3.6 0 0 1 4.96 9.67A3.6 3.6 0 0 1 9.67 4.96A3.6 3.6 0 0 1 16.33 4.96A3.6 3.6 0 0 1 21.04 9.67A3.6 3.6 0 0 1 21.04 16.33Z"/><path d="M15.6 10.2C15.2 9.2 14.2 8.8 13 8.8C11.5 8.8 10.4 9.6 10.4 10.8C10.4 13.6 15.8 12.2 15.8 15.2C15.8 16.5 14.6 17.3 13 17.3C11.7 17.3 10.6 16.8 10.2 15.7M13 7V19" stroke-width="1.7"/></svg>
<span class="t " style="left:1628.90px;top:23px;line-height:20px;font-size:14.4px;color:#858696;letter-spacing:0.333px;-webkit-text-stroke:0.55px #858696;">Výchozí</span>
<svg style="position:absolute;left:1704.80px;top:23.20px;" width="18" height="19" viewBox="0 0 18 19" fill="none" stroke="#8c8d9d" stroke-width="1.9" stroke-linecap="round" stroke-linejoin="round"><circle cx="9" cy="5.6" r="3.7"/><path d="M2.2 17.2V15.8C2.2 13.5 4 12 6.2 12H11.8C14 12 15.8 13.5 15.8 15.8V17.2Z"/></svg>
<span class="t " style="left:1738.30px;top:23px;line-height:20px;font-size:14.4px;color:#858696;letter-spacing:0.383px;-webkit-text-stroke:0.55px #858696;">Janek Křikava</span>
<svg style="position:absolute;left:1853.60px;top:21.50px;" width="24" height="24" viewBox="0 0 24 24" fill="none" stroke="#8c8d9d" stroke-width="1.9" stroke-linecap="round" stroke-linejoin="round"><circle cx="12" cy="12" r="10"/><ellipse cx="12" cy="12" rx="4.3" ry="10"/><path d="M2.8 8.6H21.2M2.8 15.4H21.2"/></svg>
<span class="t " style="left:1889.40px;top:23px;line-height:20px;font-size:14.4px;color:#858696;letter-spacing:0.417px;-webkit-text-stroke:0.55px #858696;">Čeština</span>
<svg style="position:absolute;left:1960.70px;top:21.30px;" width="24" height="24" viewBox="0 0 24 24" fill="none" stroke="#8c8d9d" stroke-width="2" stroke-linecap="round" stroke-linejoin="round"><path d="M13.6 2.2A10 10 0 1 0 21.6 17.4A8.6 8.6 0 0 1 13.6 2.2Z"/></svg>
<svg style="position:absolute;left:2007.60px;top:21.50px;" width="26" height="24" viewBox="0 0 26 24" fill="none" stroke="#8c8d9d" stroke-width="2" stroke-linecap="round" stroke-linejoin="round"><path d="M13.2 1.2V2.6M13.2 8.8V10.2M13.2 16.6V22.2" stroke-width="2.1"/><path d="M4.6 3H21L23.6 5.7L21 8.4H4.6Z"/><path d="M21.6 10.9H5.2L2.4 13.6L5.2 16.3H21.6Z"/></svg>
<svg style="position:absolute;left:2056.50px;top:22.10px;" width="24" height="22" viewBox="0 0 24 22" fill="none" stroke="#8c8d9d" stroke-width="2" stroke-linecap="round" stroke-linejoin="round"><rect x="1.4" y="6.4" width="21.2" height="5" rx=".6"/><path d="M3.4 11.6V20.4H20.6V11.6M12 6.4V20.4"/><path d="M12 6.2C10.4 2.2 6.6 1.2 6 3.6C5.6 5.4 8 6.2 12 6.2C16 6.2 18.4 5.4 18 3.6C17.4 1.2 13.6 2.2 12 6.2Z"/></svg>
<svg style="position:absolute;left:2106.00px;top:22.20px;" width="22" height="24" viewBox="0 0 22 24" fill="none" stroke="#8c8d9d" stroke-width="2" stroke-linecap="round" stroke-linejoin="round"><path d="M11 1.6V3M4.4 10.2C4.4 6 7.2 3.4 11 3.4S17.6 6 17.6 10.2C17.6 15 19.4 16.6 20.2 17.6V18.4H1.8V17.6C2.6 16.6 4.4 15 4.4 10.2Z"/><path d="M8.8 21.4C9.4 22.4 10.2 22.6 11 22.6S12.6 22.4 13.2 21.4" /></svg>
<div style="position:absolute;left:2070.8px;top:12px;width:21px;height:21px;border-radius:50%;background:#ea5468"></div>
<div style="position:absolute;left:2117.8px;top:12px;width:21px;height:21px;border-radius:50%;background:#ea5468"></div>
<span class="t " style="left:2078.80px;top:14px;line-height:15px;font-size:9.8px;color:#fff;font-weight:700;transform:scaleX(1.15);transform-origin:0 0;">1</span>
<span class="t " style="left:2119.90px;top:14px;line-height:15px;font-size:9.8px;color:#fff;font-weight:700;letter-spacing:0.800px;">416</span>
<svg style="position:absolute;left:2153.10px;top:20.90px;" width="24" height="24" viewBox="0 0 24 24" fill="none" stroke="#8c8d9d" stroke-width="2.3" stroke-linecap="round" stroke-linejoin="round"><circle cx="12" cy="12" r="9.9"/><path d="M9.1 9.4C9.1 7.6 10.5 6.7 12 6.7S14.9 7.7 14.9 9.3C14.9 11.2 12 11.5 12 13.6" stroke-width="2.5"/><circle cx="12" cy="17.1" r="1.5" fill="#8c8d9d" stroke="none"/></svg>
<svg style="position:absolute;left:2200.40px;top:20.80px;" width="24" height="24" viewBox="0 0 24 24" fill="none" stroke="#8c8d9d" stroke-width="2.2" stroke-linecap="round" stroke-linejoin="round"><circle cx="10" cy="10" r="8.2"/><path d="M16.1 16.1L22.4 22.4" stroke-width="2.4"/></svg>
<svg style="position:absolute;left:2247.40px;top:24.10px;" width="26" height="18" viewBox="0 0 26 18" fill="none" stroke="#8c8d9d" stroke-width="2.1" stroke-linecap="round" stroke-linejoin="round"><path d="M8.6 1.6H4.4C2.8 1.6 2 2.6 2 4V14C2 15.4 2.8 16.4 4.4 16.4H8.6"/><path d="M9.4 9H23.4M17.6 3L23.8 9L17.6 15" stroke-width="2.2"/></svg>
</div>
</div></body></html>
